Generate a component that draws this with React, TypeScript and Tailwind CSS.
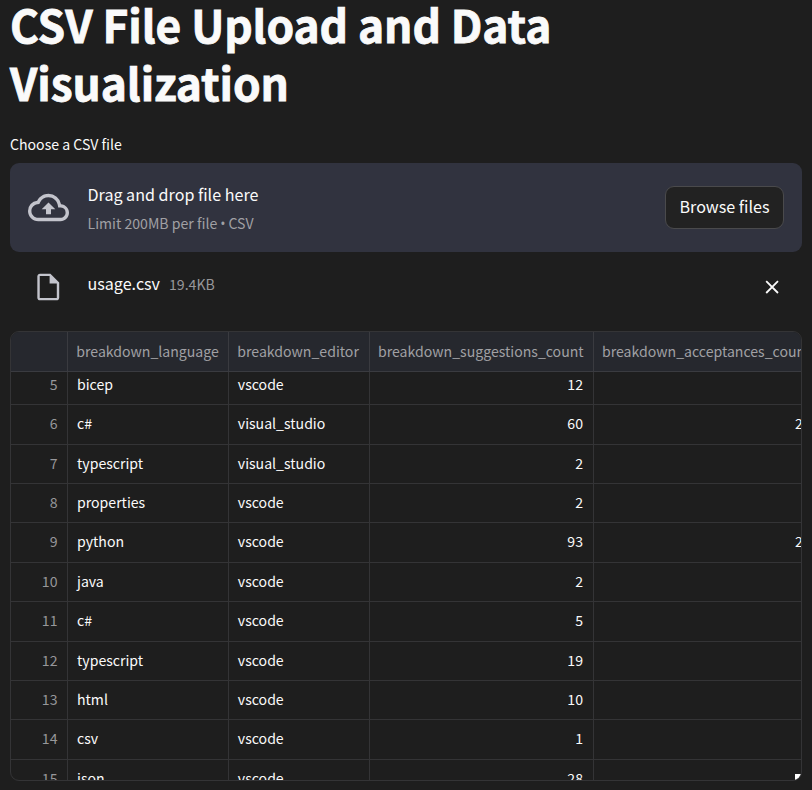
const rows: [number, string, string, number, string][] = [
  [5, 'bicep', 'vscode', 12, ''],
  [6, 'c#', 'visual_studio', 60, '2'],
  [7, 'typescript', 'visual_studio', 2, ''],
  [8, 'properties', 'vscode', 2, ''],
  [9, 'python', 'vscode', 93, '2'],
  [10, 'java', 'vscode', 2, ''],
  [11, 'c#', 'vscode', 5, ''],
  [12, 'typescript', 'vscode', 19, ''],
  [13, 'html', 'vscode', 10, ''],
  [14, 'csv', 'vscode', 1, ''],
  [15, 'json', 'vscode', 28, ''],
];

const columns = 'grid grid-cols-[57px_161px_141px_224px_1fr]';

function Uploader() {
  return (
    <section className="mt-[6px] flex h-[89px] items-center rounded-[9px] bg-[#31333f] pr-[18px] pl-[18px]">
      <svg viewBox="0 0 24 24" className="size-[41px] shrink-0 fill-[#c3c4cc]">
        <path d="M19.35 10.04A7.49 7.49 0 0 0 12 4C9.11 4 6.6 5.64 5.35 8.04A5.994 5.994 0 0 0 0 14c0 3.31 2.69 6 6 6h13c2.76 0 5-2.24 5-5 0-2.64-2.05-4.78-4.65-4.96zM19 18H6c-2.21 0-4-1.79-4-4 0-2.05 1.53-3.76 3.56-3.97l1.07-.11.5-.95A5.469 5.469 0 0 1 12 6c2.62 0 4.88 1.86 5.39 4.43l.3 1.5 1.53.11A2.98 2.98 0 0 1 22 15c0 1.65-1.35 3-3 3zM8 13h2.55v3h2.9v-3H16l-4-4z" />
      </svg>
      <div className="ml-[18.5px] flex flex-1 flex-col">
        <span className="text-[16.1px] leading-[29px] text-[#fafafa]">Drag and drop file here</span>
        <span className="mt-[2px] text-[14.1px] leading-[25px] text-[#a0a0a4]">
          Limit 200MB per file<span className="mx-[3px] font-['Open_Sans'] text-[14px] leading-none">•</span>CSV
        </span>
      </div>
      <button className="h-[43px] w-[119px] rounded-[9px] border border-[#4a4a4c] bg-[#222222] pb-[3px] text-[16.1px] text-[#fafafa]">
        Browse files
      </button>
    </section>
  );
}

function UploadedFile() {
  return (
    <div className="flex h-[79px] items-center pr-[18px] pl-[22px]">
      <svg viewBox="0 0 24 24" className="mt-[-9px] size-[32px] shrink-0 fill-[#c3c4cc]">
        <path d="M13.8 2H6c-1.1 0-2 .9-2 2v16c0 1.100.9 2 2 2h12.400c1.100 0 2-.9 2-2V8.600zM18.600 20.200H5.800V3.800h7.400v5.600h5.400z" />
      </svg>
      <span className="mt-[-16px] ml-[23.5px] text-[16.1px] leading-[29px] text-[#fafafa]">usage.csv</span>
      <span className="mt-[-14px] ml-[9px] flex-1 text-[14.1px] leading-[29px] text-[#97979a]">19.4KB</span>
      <svg viewBox="0 0 14 14" className="mt-[-9px] mr-[5px] size-[14px] stroke-[#fafafa] stroke-[1.8]">
        <path d="M1.200 1.200L13 13M13 1.200L1.200 13" />
      </svg>
    </div>
  );
}

function DataTable() {
  return (
    <div className="relative flex h-[450px] flex-col overflow-hidden rounded-[9px] border border-[#343436] text-[14.1px] whitespace-nowrap">
      <div className={`${columns} h-[40px] shrink-0 border-b border-[#3a3b40] bg-[#26282e] leading-[39px] text-[#a0a0a4]`}>
        <div className="border-r border-[#3a3b40]" />
        <div className="border-r border-[#3a3b40] pl-[8.3px]">breakdown_language</div>
        <div className="border-r border-[#3a3b40] pl-[8.3px]">breakdown_editor</div>
        <div className="border-r border-[#3a3b40] pl-[8px]">breakdown_suggestions_count</div>
        <div className="overflow-hidden pl-[8px]">breakdown_acceptances_count</div>
      </div>
      <div className="min-h-0 flex-1 overflow-hidden">
        <div className="mt-[-6.1px] text-[#fafafa]">
          {rows.map(([index, language, editor, suggestions, acceptances]) => (
            <div key={index} className={`${columns} h-[39.375px] border-b border-[#343436] leading-[37.6px]`}>
              <div className="border-r border-[#343436] pr-[9.5px] text-right text-[#97979a]">{index}</div>
              <div className="border-r border-[#343436] pl-[9px]">{language}</div>
              <div className="border-r border-[#343436] pl-[8.8px]">{editor}</div>
              <div className="border-r border-[#343436] pr-[10px] text-right">{suggestions}</div>
              <div className="overflow-hidden pl-[201px]">{acceptances}</div>
            </div>
          ))}
        </div>
      </div>
      <div className="absolute right-0 bottom-0 size-[6px] bg-white" />
    </div>
  );
}

export default function App() {
  return (
    <main className="h-[790px] w-[812px] overflow-hidden bg-[#1e1e1e] px-[10px] font-['Noto_Sans_CJK_SC','Noto_Sans_CJK_JP',sans-serif]">
      <h1 className="mt-[-5.5px] h-[137.5px] text-[44.3px] leading-[58.8px] font-bold tracking-[-0.002em] text-[#fafafa] [-webkit-text-stroke:0.8px_#fafafa]">
        CSV File Upload and Data
        <br />
        Visualization
      </h1>
      <div className="h-[25px] text-[14.1px] leading-[25px] text-[#fafafa]">Choose a CSV file</div>
      <Uploader />
      <UploadedFile />
      <DataTable />
    </main>
  );
}
